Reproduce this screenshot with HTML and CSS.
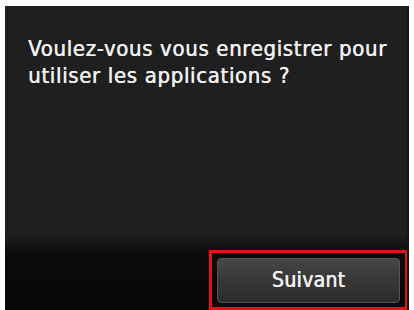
FILE: index.html
```html
<!DOCTYPE html>
<html lang="fr">
<head>
<meta charset="utf-8">
<link rel="stylesheet" href="styles.css">
</head>
<body>
<div class="screen">
  <div class="message">Voulez-vous vous enregistrer pour<br>utiliser les applications ?</div>
  <div class="footer">
    <div class="highlight">
      <div class="btn">Suivant</div>
    </div>
  </div>
</div>
</body>
</html>
```
FILE: styles.css
```css
html, body {
  margin: 0;
  padding: 0;
  background: #ffffff;
}
.screen {
  margin: 6px 5px 0 5px;
  height: 304px;
  background: #1f1f1f;
  display: flex;
  flex-direction: column;
  box-sizing: border-box;
  border-right: 2px solid #161616;
  overflow: hidden;
}
.message {
  flex: 1;
  padding: 29px 0 0 23px;
  color: #f0f0f0;
  font-family: "DejaVu Sans Condensed", "DejaVu Sans", sans-serif;
  font-stretch: condensed;
  font-size: 22px;
  line-height: 27px;
  letter-spacing: 0.65px;
  text-shadow: 0.5px 0 0 #f0f0f0;
}
.footer {
  height: 76px;
  display: flex;
  justify-content: flex-end;
  align-items: flex-end;
  background: linear-gradient(to bottom, #1f1f1f 0px, #161616 10px, #0b0b0b 18px, #080808 100%);
}
.highlight {
  width: 199px;
  height: 60px;
  box-sizing: border-box;
  border: 3px solid #e41414;
  padding: 5px 5px 4px 5px;
  margin-right: -1px;
}
.btn {
  height: 100%;
  box-sizing: border-box;
  border: 1px solid #555;
  border-radius: 4px;
  background: linear-gradient(to bottom, #474747 0%, #383838 45%, #2c2c2c 100%);
  display: flex;
  align-items: center;
  justify-content: center;
  color: #f0f0f0;
  font-family: "DejaVu Sans Condensed", "DejaVu Sans", sans-serif;
  font-stretch: condensed;
  font-size: 21px;
  letter-spacing: 0.3px;
  text-shadow: 0.6px 0 0 #f0f0f0;
  padding-bottom: 1px;
}
```
